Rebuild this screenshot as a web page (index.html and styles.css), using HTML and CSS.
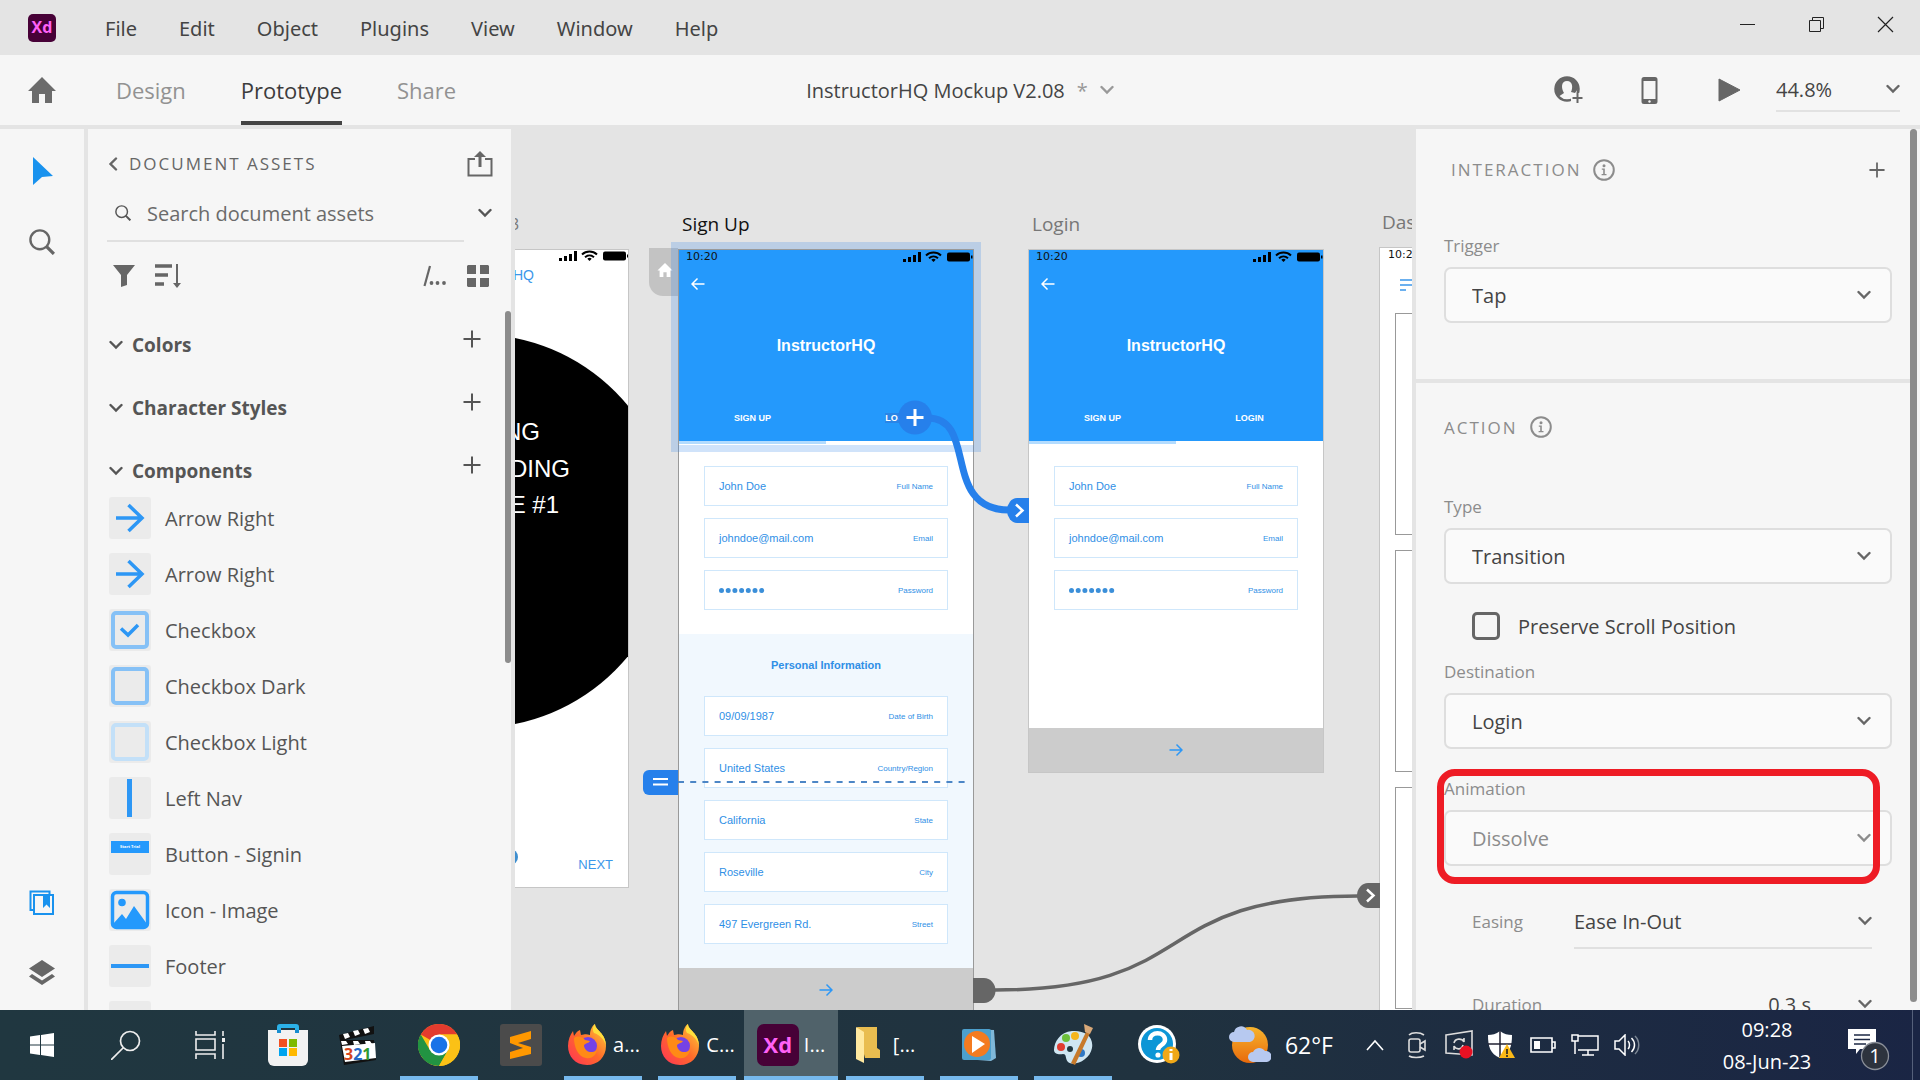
FILE: index.html
```html
<!DOCTYPE html>
<html lang="en">
<head>
  <meta charset="UTF-8">
  <meta name="viewport" content="width=device-width, initial-scale=1.0">
  <title>InstructorHQ Mockup V2.08</title>
  <link rel="stylesheet" href="styles.css">
</head>
<body>
  <!-- Shared icons -->
  <svg class="sprite" aria-hidden="true">
    <symbol id="chevron" viewBox="0 0 14 14"><path d="M1.500 4l5.500 5.500L12.500 4" fill="none" stroke="currentColor" stroke-width="2.400" stroke-linecap="round"/></symbol>
    <symbol id="plus" viewBox="0 0 18 18"><path d="M9 0.500v17M0.500 9h17" stroke="currentColor" stroke-width="2"/></symbol>
    <symbol id="info" viewBox="0 0 22 22"><circle cx="11" cy="11" r="9.800" fill="none" stroke="currentColor" stroke-width="2"/><circle cx="11" cy="6.800" r="1.500" fill="currentColor"/><path d="M8.800 9.500h3v5.500h1.700v1.300H8.600V15h1.600v-4.200H8.800z" fill="currentColor"/></symbol>
    <symbol id="arrow" viewBox="0 0 14 14"><path d="M0.500 7h12M7.500 1.500L13 7l-5.500 5.500" fill="none" stroke="currentColor" stroke-width="1.500"/></symbol>
    <symbol id="search" viewBox="0 0 24 24"><circle cx="10" cy="10" r="8.700" fill="none" stroke="currentColor" stroke-width="2.200"/><path d="M16 16l7 7" stroke="currentColor" stroke-width="3"/></symbol>
    <symbol id="status" viewBox="0 0 70 12">
      <path d="M0 8h3v3H0zM5 6h3v5H5zM10 4h3v7h-3zM15 1h3v10h-3z"/>
      <path d="M23 4.500a11 11 0 0 1 15 0M26 7.200a7 7 0 0 1 9 0" fill="none" stroke="#000" stroke-width="2"/><path d="M28.300 8.700a3.500 3.500 0 0 1 4.400 0L30.500 11z"/>
      <rect x="44" y="1.500" width="23" height="9" rx="2"/><path d="M68 4.500h1.500v3H68z"/>
    </symbol>
    <symbol id="firefox" viewBox="0 0 42 42">
      <path d="M21 41C9 41 2 32 2 22c0-6 2-11 5-15l1 5c2-3 3-5 6-6l1 5c4-1 6-1 9 0 0-5 2-9 5-11 0 6 11 9 11 22 0 11-8 19-19 19z" fill="url(#fox)"/>
      <circle cx="22" cy="22" r="9" fill="#7542e5"/>
      <path d="M8 14c4-3 9-1 11 2l5 1c-2 3-6 2-6 5 1 6 8 8 13 4-1 6-6 9-11 8C12 33 8 23 8 14z" fill="#ff8a16"/>
      <path d="M29 0c0 6 11 9 11 22-2-7-6-11-12-13-2-3-1-7 1-9z" fill="#ffdf3d"/>
    </symbol>
    <linearGradient id="fox" x1="0" y1="1" x2="1" y2="0"><stop offset="0" stop-color="#ff3158"/><stop offset=".5" stop-color="#ff6a2a"/><stop offset="1" stop-color="#ffd43a"/></linearGradient>
    <linearGradient id="sun" x1="0" y1="0" x2="0" y2="1"><stop offset="0" stop-color="#f7b52e"/><stop offset="1" stop-color="#e8690b"/></linearGradient>
  </svg>

  <header class="menubar">
    <span class="xd-logo">Xd</span>
    <nav class="menus">
      <a href="#">File</a>
      <a href="#">Edit</a>
      <a href="#">Object</a>
      <a href="#">Plugins</a>
      <a href="#">View</a>
      <a href="#">Window</a>
      <a href="#">Help</a>
    </nav>
    <div class="window-buttons">
      <button aria-label="Minimize"><svg width="17" height="17" viewBox="0 0 17 17"><path d="M1 8.500h15" stroke="#222"/></svg></button>
      <button aria-label="Restore"><svg width="17" height="17" viewBox="0 0 17 17"><path d="M1.500 4.500h11v11h-11zM4.500 4.500v-3h11v11h-3" fill="none" stroke="#222"/></svg></button>
      <button aria-label="Close"><svg width="17" height="17" viewBox="0 0 17 17"><path d="M1 1l15 15M16 1L1 16" stroke="#222" stroke-width="1.200"/></svg></button>
    </div>
  </header>

  <div class="toolbar">
    <div class="modes">
      <button class="home" aria-label="Home"><svg width="28" height="26" viewBox="0 0 28 26"><path d="M14 0l14 14h-4v12h-7v-9h-6v9H4V14H0z" fill="#6b6b6b"/></svg></button>
      <a href="#" class="mode">Design</a>
      <a href="#" class="mode active">Prototype</a>
      <a href="#" class="mode">Share</a>
    </div>
    <button class="doc-title">InstructorHQ Mockup V2.08 <span>*</span><svg width="14" height="14"><use href="#chevron"/></svg></button>
    <div class="toolbar-right">
      <button class="invite" aria-label="Invite"><svg width="30" height="28" viewBox="0 0 30 28"><circle cx="13" cy="13" r="11.500" fill="none" stroke="#666" stroke-width="2.500"/><path d="M2 14C2 6 6 1 13 1s11 5 11 12l-3 4-4-1c2-4 2-11-4-11S7 12 10 17l-6 4z" fill="#666"/><path d="M17 17h13v11H17z" fill="#f6f6f6"/><path d="M23.500 17v10M18.500 22h10" stroke="#666" stroke-width="2"/></svg></button>
      <button aria-label="Device preview"><svg width="17" height="27" viewBox="0 0 17 27"><path fill-rule="evenodd" d="M3 0h11a2.500 2.500 0 0 1 2.500 2.500v22A2.500 2.500 0 0 1 14 27H3a2.500 2.500 0 0 1-2.500-2.500v-22A2.500 2.500 0 0 1 3 0zm-.5 4v18h12V4z" fill="#666"/><circle cx="8.500" cy="24.500" r="1.200" fill="#f6f6f6"/></svg></button>
      <button aria-label="Play"><svg width="23" height="24" viewBox="0 0 23 24"><path d="M1 1l21 11L1 23z" fill="#666" stroke="#666"/></svg></button>
      <div class="select zoom-select">
        <select aria-label="Zoom"><option>44.8%</option></select>
        <svg width="14" height="14"><use href="#chevron"/></svg>
      </div>
    </div>
  </div>

  <main class="workspace">
    <aside class="tool-rail">
      <button aria-label="Select"><svg width="24" height="28" viewBox="0 0 24 28"><path d="M3 0l20 19-11 1-9 8z" fill="#1992ee"/></svg></button>
      <button aria-label="Zoom"><svg width="26" height="26"><use href="#search"/></svg></button>
      <span class="rail-space"></span>
      <button aria-label="Assets"><svg width="26" height="26" viewBox="0 0 26 26"><path d="M5 20H1.500V1.500h19V4" fill="none" stroke="#1992ee" stroke-width="2"/><path d="M5 5h19v19H5z" fill="none" stroke="#1992ee" stroke-width="2"/><path d="M14 5h7v13l-3.500-3.500L14 18z" fill="#1992ee"/></svg></button>
      <button aria-label="Layers"><svg width="26" height="26" viewBox="0 0 26 26"><path d="M13 0l13 8.500L13 17 0 8.500z" fill="#666"/><path d="M3 14l10 6.500L23 14l3 2.500L13 25 0 16.500z" fill="#666"/></svg></button>
    </aside>

    <section class="assets">
      <div class="assets-head">
        <svg class="turn-left" width="14" height="14"><use href="#chevron"/></svg>
        <h2 class="caps">DOCUMENT ASSETS</h2>
        <button aria-label="Publish"><svg width="26" height="26" viewBox="0 0 26 26"><path d="M8 8H1.500v16.500h23V8H18" fill="none" stroke="#666" stroke-width="2"/><path d="M13 16V4" stroke="#666" stroke-width="3"/><path d="M13 0l6 6H7z" fill="#666"/></svg></button>
      </div>
      <div class="search-row">
        <label for="asset-search"><svg width="16" height="16"><use href="#search"/></svg></label>
        <input type="text" id="asset-search" placeholder="Search document assets">
        <button aria-label="Search options"><svg width="14" height="14"><use href="#chevron"/></svg></button>
      </div>
      <div class="filter-row">
        <button aria-label="Filter"><svg width="22" height="22" viewBox="0 0 22 22"><path d="M0 0h22l-8 10v10l-6 2V10z" fill="#666"/></svg></button>
        <button aria-label="Sort"><svg width="26" height="24" viewBox="0 0 26 24"><path d="M0 2h17M0 11h13M0 20h9" stroke="#666" stroke-width="3.500"/><path d="M22 0v20" stroke="#666" stroke-width="2"/><path d="M18 19h8l-4 5z" fill="#666"/></svg></button>
        <button class="push" aria-label="Path"><svg width="24" height="22" viewBox="0 0 24 22"><path d="M7 1L1.500 21" stroke="#666" stroke-width="2.200"/><g fill="#666"><circle cx="8.500" cy="18" r="1.900"/><circle cx="14.500" cy="18" r="1.900"/><circle cx="21" cy="18" r="1.900"/></g></svg></button>
        <button aria-label="Grid view"><svg width="22" height="22" viewBox="0 0 22 22"><path d="M1 0h8v9H0V1zM13 0h8l1 1v8h-9zM0 13h9v9H1l-1-1zM13 13h9v8l-1 1h-8z" fill="#666"/></svg></button>
      </div>

      <div class="asset-scroll">
        <div class="asset-body">
          <div class="group"><svg width="14" height="14"><use href="#chevron"/></svg><h3>Colors</h3><button aria-label="Add color"><svg width="18" height="18"><use href="#plus"/></svg></button></div>
          <div class="group"><svg width="14" height="14"><use href="#chevron"/></svg><h3>Character Styles</h3><button aria-label="Add character style"><svg width="18" height="18"><use href="#plus"/></svg></button></div>
          <div class="group"><svg width="14" height="14"><use href="#chevron"/></svg><h3>Components</h3><button aria-label="Add component"><svg width="18" height="18"><use href="#plus"/></svg></button></div>
          <ul class="components">
            <li><svg class="thumb" viewBox="0 0 42 42"><path d="M7 21h26M19.500 8L33 21 19.500 34" fill="none" stroke="#2d97f5" stroke-width="3.500"/></svg>Arrow Right</li>
            <li><svg class="thumb" viewBox="0 0 42 42"><path d="M7 21h26M19.500 8L33 21 19.500 34" fill="none" stroke="#2d97f5" stroke-width="3.500"/></svg>Arrow Right</li>
            <li><svg class="thumb" viewBox="0 0 42 42"><rect x="4" y="4" width="34" height="34" rx="3" fill="none" stroke="#86c1f6" stroke-width="4"/><path d="M12 19.500l7 6.500 10-10" fill="none" stroke="#2d97f5" stroke-width="3.500"/></svg>Checkbox</li>
            <li><svg class="thumb" viewBox="0 0 42 42"><rect x="4" y="4" width="34" height="34" rx="3" fill="none" stroke="#86c1f6" stroke-width="4"/></svg>Checkbox Dark</li>
            <li><svg class="thumb" viewBox="0 0 42 42"><rect x="4" y="4" width="34" height="34" rx="3" fill="none" stroke="#c3e0f8" stroke-width="4"/></svg>Checkbox Light</li>
            <li><svg class="thumb" viewBox="0 0 42 42"><path d="M18 2h5v38h-5z" fill="#2d97f5"/></svg>Left Nav</li>
            <li><svg class="thumb" viewBox="0 0 42 42"><path d="M2 8h38v12H2z" fill="#2499fc"/><text x="21" y="15" class="tiny">Start Trial</text></svg>Button - Signin</li>
            <li><svg class="thumb" viewBox="0 0 42 42"><rect x="3.500" y="3.500" width="35" height="35" rx="4" fill="none" stroke="#2499fc" stroke-width="3.500"/><circle cx="13" cy="13.500" r="3.800" fill="#2499fc"/><path d="M4 35l9-10 4 5 8-13 13 18v4H4z" fill="#2499fc"/></svg>Icon - Image</li>
            <li><svg class="thumb" viewBox="0 0 42 42"><path d="M2 19h38v4H2z" fill="#2d97f5"/></svg>Footer</li>
            <li><svg class="thumb" viewBox="0 0 42 42"></svg></li>
          </ul>
        </div>
        <span class="thumb-bar"></span>
      </div>
    </section>

    <section class="canvas">
      <span class="board-name name-intro">3</span>
      <div class="artboard intro">
        <svg width="113" height="637" viewBox="0 0 113 637">
          <circle cx="-39" cy="281" r="197"/>
          <g class="intro-lines"><text x="25" y="190">NG</text><text x="55" y="227">DING</text><text x="44" y="263">E #1</text></g>
          <text class="intro-brand" x="19" y="30">HQ</text>
          <text class="intro-next" x="98" y="619">NEXT</text>
          <circle cx="-5" cy="607" r="8" fill="#3d8ecf"/>
          <use href="#status" x="44" y="0" width="70" height="12"/>
        </svg>
      </div>

      <span class="board-name name-signup">Sign Up</span>
      <div class="home-tab"><svg width="16" height="14" viewBox="0 0 28 26"><path d="M14 0l14 14h-4v12h-7v-9h-6v9H4V14H0z" fill="#fff"/></svg></div>
      <article class="artboard signup">
        <div class="board-head">
          <div class="status"><span>10:20</span><svg width="70" height="12"><use href="#status"/></svg></div>
          <svg class="back" width="14" height="14"><use href="#arrow"/></svg>
          <h4>InstructorHQ</h4>
          <div class="tabs"><span>SIGN UP</span><span><mark>LOGIN</mark></span></div>
        </div>
        <div class="tab-line"></div>
        <div class="fields">
          <div class="field"><b>John Doe</b><small>Full Name</small></div>
          <div class="field"><b>johndoe@mail.com</b><small>Email</small></div>
          <div class="field"><svg width="46" height="5" viewBox="0 0 46 5"><path d="M2.500 2.500h43" class="dots"/></svg><small>Password</small></div>
        </div>
        <div class="personal">
          <h5>Personal Information</h5>
          <div class="field"><b>09/09/1987</b><small>Date of Birth</small></div>
          <div class="field"><b>United States</b><small>Country/Region</small></div>
          <div class="field"><b>California</b><small>State</small></div>
          <div class="field"><b>Roseville</b><small>City</small></div>
          <div class="field"><b>497 Evergreen Rd.</b><small>Street</small></div>
        </div>
        <div class="board-foot"><svg width="14" height="14"><use href="#arrow"/></svg></div>
      </article>
      <div class="selection"></div>

      <span class="board-name name-login">Login</span>
      <article class="artboard login">
        <div class="board-head">
          <div class="status"><span>10:20</span><svg width="70" height="12"><use href="#status"/></svg></div>
          <svg class="back" width="14" height="14"><use href="#arrow"/></svg>
          <h4>InstructorHQ</h4>
          <div class="tabs"><span>SIGN UP</span><span>LOGIN</span></div>
        </div>
        <div class="tab-line"></div>
        <div class="fields">
          <div class="field"><b>John Doe</b><small>Full Name</small></div>
          <div class="field"><b>johndoe@mail.com</b><small>Email</small></div>
          <div class="field"><svg width="46" height="5" viewBox="0 0 46 5"><path d="M2.500 2.500h43" class="dots"/></svg><small>Password</small></div>
        </div>
        <div class="board-foot"><svg width="14" height="14"><use href="#arrow"/></svg></div>
      </article>

      <span class="board-name name-dash">Dashboard</span>
      <article class="artboard dash">
        <div class="status"><span>10:20</span></div>
        <svg class="burger" width="20" height="12" viewBox="0 0 20 12"><path d="M0 1h20M0 6h20M0 11h6" stroke="#3b97ea" stroke-width="1.500"/></svg>
        <div class="card"></div>
        <div class="card"></div>
        <div class="card"></div>
      </article>

      <!-- Prototype wires -->
      <svg class="wires" width="897" height="881" viewBox="515 129 897 881">
        <path d="M678 782h292" stroke="#4c86c6" stroke-width="2" stroke-dasharray="6 6.200"/>
        <path d="M678 770h-29a6 6 0 0 0-6 6v13a6 6 0 0 0 6 6h29z" fill="#2680eb"/>
        <path d="M653 779h15M653 784.500h15" stroke="#fff" stroke-width="2"/>
        <path d="M928 418C978 418 941 510 1009 510" fill="none" stroke="#2680eb" stroke-width="7"/>
        <circle cx="915" cy="417.500" r="17" fill="#2680eb"/>
        <path d="M915 409v17M906.500 417.500h17" stroke="#fff" stroke-width="3"/>
        <path d="M1029 498h-12a10 12.500 0 0 0 0 25h12z" fill="#2680eb"/>
        <path d="M1016 504.500l6.500 6-6.500 6" fill="none" stroke="#fff" stroke-width="2.500"/>
        <path d="M995 990C1205 990 1145 896 1358 896" fill="none" stroke="#666" stroke-width="3.500"/>
        <path d="M973 978h11a11.500 12.500 0 0 1 0 25h-11z" fill="#666"/>
        <path d="M1380 883h-12a11 12.500 0 0 0 0 25h12z" fill="#666"/>
        <path d="M1367 889.500l6.500 6-6.500 6" fill="none" stroke="#fff" stroke-width="2.500"/>
      </svg>
    </section>

    <aside class="inspector">
      <div class="inspector-scroll">
        <section class="interaction">
          <div class="inspector-head indent"><h2 class="caps">INTERACTION</h2><svg width="22" height="22"><use href="#info"/></svg><button aria-label="Add interaction"><svg width="16" height="16"><use href="#plus"/></svg></button></div>
          <div class="control">
            <label for="trigger">Trigger</label>
            <div class="select boxed"><select id="trigger"><option>Tap</option></select><svg width="14" height="14"><use href="#chevron"/></svg></div>
          </div>
        </section>
        <section class="action">
          <div class="inspector-head"><h2 class="caps">ACTION</h2><svg width="22" height="22"><use href="#info"/></svg></div>
          <div class="control">
            <label for="type">Type</label>
            <div class="select boxed"><select id="type"><option>Transition</option></select><svg width="14" height="14"><use href="#chevron"/></svg></div>
          </div>
          <div class="check">
            <input type="checkbox" id="preserve">
            <label for="preserve">Preserve Scroll Position</label>
          </div>
          <div class="control">
            <label for="destination">Destination</label>
            <div class="select boxed"><select id="destination"><option>Login</option></select><svg width="14" height="14"><use href="#chevron"/></svg></div>
          </div>
          <div class="control highlighted">
            <label for="animation">Animation</label>
            <div class="select boxed muted"><select id="animation"><option>Dissolve</option></select><svg width="14" height="14"><use href="#chevron"/></svg></div>
          </div>
          <div class="inline-control">
            <label for="easing">Easing</label>
            <div class="select lined"><select id="easing"><option>Ease In-Out</option></select><svg width="14" height="14"><use href="#chevron"/></svg></div>
          </div>
          <div class="inline-control duration">
            <label for="duration">Duration</label>
            <div class="select lined"><select id="duration"><option>0.3 s</option></select><svg width="14" height="14"><use href="#chevron"/></svg></div>
          </div>
        </section>
      </div>
      <span class="thumb-bar"></span>
    </aside>
  </main>

  <footer class="taskbar">
    <button class="sys" aria-label="Start"><svg width="24" height="24" viewBox="0 0 24 24"><path d="M0 3.500L10 2v9.500H0zM11 2l13-2v11.500H11zM0 12.500h10V22L0 20.500zM11 12.500h13V24l-13-2z" fill="#fff"/></svg></button>
    <button class="sys" aria-label="Search"><svg width="30" height="30" viewBox="0 0 30 30"><circle cx="19" cy="11" r="9.500" fill="none" stroke="#eee" stroke-width="1.700"/><path d="M12 18L0 30" stroke="#eee" stroke-width="1.700"/></svg></button>
    <button class="sys" aria-label="Task view"><svg width="30" height="28" viewBox="0 0 30 28"><path d="M1 0v4h19V0M1 28v-5h19v5M1 8h19v11H1zM28 0v5M28 13v15" fill="none" stroke="#eee" stroke-width="1.600"/><path d="M27 7h3v4h-3z" fill="#eee"/></svg></button>
    <button class="pin store" aria-label="Store"><svg width="40" height="42" viewBox="0 0 40 42"><path d="M9 9V3a3 3 0 0 1 3-3h16a3 3 0 0 1 3 3v6h-4V4H13v5z" fill="#2bb1e8"/><path d="M0 6h40v30a6 6 0 0 1-6 6H6a6 6 0 0 1-6-6z" fill="#f2f2f2"/><path d="M9 6h4v3H9zM27 6h4v3h-4z" fill="#178ed0"/><path d="M11 15h8v8h-8z" fill="#f25022"/><path d="M21 15h8v8h-8z" fill="#7fba00"/><path d="M11 24h8v8h-8z" fill="#00a4ef"/><path d="M21 24h8v8h-8z" fill="#ffb900"/></svg></button>
    <button class="pin" aria-label="Media player"><svg width="40" height="40" viewBox="0 0 40 40"><path d="M1 10L36 1v8L2 16z" fill="#111"/><path d="M5 9l5-1 2 4-5 2zM15 6l5-1 2 4-5 2zM25 4l5-1 2 4-5 2z" fill="#fff"/><path d="M2 15h34l2 20-32 5z" fill="#111"/><path d="M4 21l33-3 1 15-31 4z" fill="#fff"/><path d="M3 16h5l2 3-6 1zM15 16h5l2 3-6 1zM27 16h5l2 3-6 1z" fill="#fff"/><text x="6" y="35" class="clap"><tspan fill="#d8451c">3</tspan><tspan fill="#2468c8">2</tspan><tspan fill="#2f9b2f">1</tspan></text></svg></button>
    <button class="task running" aria-label="Chrome"><svg width="42" height="42" viewBox="0 0 42 42"><circle cx="21" cy="21" r="21" fill="#fbc116"/><path d="M21 21L2.800 10.500a21 21 0 0 1 36.400 0H21z" fill="#e33b2e"/><path d="M21 21l9 5.200L21 42A21 21 0 0 1 2.800 10.500L12 26.200z" fill="#229342"/><path d="M21 10.500h18.200A21 21 0 0 1 21 42l9-15.700z" fill="#fbc116"/><circle cx="21" cy="21" r="10.500" fill="#fff"/><circle cx="21" cy="21" r="8.300" fill="#1a73e8"/></svg></button>
    <button class="pin editor" aria-label="Sublime Text"><svg width="42" height="42" viewBox="0 0 42 42"><rect width="42" height="42" rx="3" fill="#4b4b4b"/><path d="M31 7v8l-13 4 13 4v7L10 35v-7l13-4-13-5v-6z" fill="#ff9800"/></svg></button>
    <button class="task running"><svg width="42" height="42"><use href="#firefox"/></svg><span>a...</span></button>
    <button class="task running"><svg width="42" height="42"><use href="#firefox"/></svg><span>C...</span></button>
    <button class="task running current"><i class="xd-big">Xd</i><span>I...</span></button>
    <button class="task running folder"><svg width="26" height="38" viewBox="0 0 26 38"><path d="M2 1h20v21l3 2v8H10z" fill="#e9bd50"/><path d="M1 1l8 5v31l-8-4z" fill="#ffe9a0"/></svg><span>[...</span></button>
    <button class="task running" aria-label="Video player"><svg width="36" height="36" viewBox="0 0 36 36"><path d="M5 2l28 1 2 28-5 3L3 32z" fill="#7fb8d9"/><rect x="1" y="2" width="29" height="31" rx="2" fill="#4c9fcc"/><circle cx="16" cy="17" r="13" fill="#f47b20"/><path d="M11 9l13 8-13 9z" fill="#fff"/></svg></button>
    <button class="task running" aria-label="Paint"><svg width="42" height="42" viewBox="0 0 42 42"><path d="M20 7C8 8 2 18 2 26c0 4 5 5 9 4 4 0 2 5 5 8 6 5 22-2 24-14C42 12 32 6 20 7z" fill="#cfe6f2"/><circle cx="9" cy="23" r="4" fill="#e03c31"/><circle cx="14" cy="14" r="4" fill="#6cbf3a"/><circle cx="23" cy="12" r="4" fill="#f4b51d"/><circle cx="29" cy="29" r="4" fill="#2f78c4"/><circle cx="18" cy="25" r="3" fill="#203740"/><path d="M34 8l4 1-15 32-4-2z" fill="#c77a2b"/><path d="M32 0l9 4-3 6-5-2z" fill="#d8a878"/></svg></button>
    <button class="pin help" aria-label="Help"><svg width="42" height="40" viewBox="0 0 42 40"><circle cx="19" cy="19" r="19" fill="#fff"/><circle cx="19" cy="19" r="16" fill="#0d96d6"/><path d="M12 15c0-9 15-9 15 0 0 5-7 5-7 10" fill="none" stroke="#fff" stroke-width="4.500"/><circle cx="20" cy="30" r="2.600" fill="#fff"/><circle cx="33" cy="30" r="8.500" fill="#f0a818"/><path d="M33 28v7M33 24v2" stroke="#fff" stroke-width="3"/></svg></button>

    <div class="tray">
      <button class="weather"><svg width="42" height="40" viewBox="0 0 42 40"><circle cx="21" cy="20" r="18" fill="url(#sun)"/><path d="M5 17a5 5 0 0 1 0-10 7 7 0 0 1 13-2 6 6 0 0 1 3 12z" fill="#b7c9f0"/><path d="M24 37a5 5 0 0 1 0-10 7 7 0 0 1 12-1 5.500 5.500 0 0 1 2 11z" fill="#b7c9f0"/></svg>62°F</button>
      <button aria-label="Hidden icons"><svg width="18" height="12" viewBox="0 0 18 12"><path d="M1 11l8-9 8 9" fill="none" stroke="#fff" stroke-width="1.600"/></svg></button>
      <button aria-label="Camera"><svg width="22" height="28" viewBox="0 0 22 28"><g fill="none" stroke="#ddd" stroke-width="1.600"><rect x="3" y="8" width="11" height="13" rx="2"/><path d="M14 13l5-3v9l-5-3M3 4c3-3 11-3 15 0M3 25c3 2 11 2 15 0"/></g></svg></button>
      <button aria-label="Sync"><svg width="30" height="30" viewBox="0 0 30 30"><path d="M2 5l26-4v24L2 23z" fill="none" stroke="#ddd" stroke-width="1.600"/><path d="M10 13c1-5 8-5 10-1v-4M19 15c-1 5-7 5-9 1v4" fill="none" stroke="#ddd" stroke-width="1.600"/><circle cx="22" cy="22" r="6.500" fill="#e81123"/></svg></button>
      <button aria-label="Security"><svg width="28" height="30" viewBox="0 0 28 30"><path d="M13 1c4 3 8 4 12 4 0 11-2 19-12 23C3 24 1 16 1 5c4 0 8-1 12-4z" fill="#fff"/><path d="M13 1v26M1 14h24" stroke="#223" stroke-width="1.500"/><path d="M20 14l8 14H12z" fill="#fbb917"/><path d="M20 19v5M20 25v2" stroke="#222" stroke-width="1.600"/></svg></button>
      <button aria-label="Battery"><svg width="26" height="16" viewBox="0 0 26 16"><path d="M1 1h21v14H1zM22 5h3v6h-3" fill="none" stroke="#fff" stroke-width="1.600"/><path d="M4 4h6v8H4z" fill="#fff"/></svg></button>
      <button aria-label="Network"><svg width="28" height="22" viewBox="0 0 28 22"><path d="M7 2h20v14H7M17 16v5M11 21h12M1 1h6v6H1zM4 7v13" fill="none" stroke="#fff" stroke-width="1.500"/></svg></button>
      <button aria-label="Volume"><svg width="26" height="22" viewBox="0 0 26 22"><path d="M1 7h4l6-6v20l-6-6H1zM14 7c2 2 2 6 0 8M17.500 4c4 4 4 10 0 14" fill="none" stroke="#fff" stroke-width="1.500"/><path d="M21 2c5 5 5 13 0 18" fill="none" stroke="#7c8795" stroke-width="1.500"/></svg></button>
      <button class="clock"><span>09:28</span><span>08-Jun-23</span></button>
      <button class="notice" aria-label="Notifications"><svg width="44" height="44" viewBox="0 0 44 44"><path d="M2 2h28v20H14l-4 5v-5H2z" fill="#fff"/><path d="M8 8h16M8 12.500h16M8 17h12" stroke="#1d2944" stroke-width="1.700"/><circle cx="29" cy="29" r="13.500" fill="#2d333e" stroke="#8a8f99" stroke-width="1.300"/><text x="29" y="36" class="badge">1</text></svg></button>
    </div>
  </footer>
</body>
</html>
```
FILE: styles.css
```css
* {
  box-sizing: border-box;
}
body {
  margin: 0;
  height: 100vh;
  display: flex;
  flex-direction: column;
  overflow: hidden;
  background-color: #e4e4e4;
  color: #444;
  font-family: "Open Sans", "Noto Sans", sans-serif;
  font-size: 20px;
}
h2, h3, h4, h5, ul {
  margin: 0;
  padding: 0;
  font-weight: normal;
}
a {
  color: inherit;
  text-decoration: none;
}
button {
  border: none;
  background: none;
  padding: 0;
  color: inherit;
  font: inherit;
  cursor: pointer;
}
svg {
  display: block;
  flex: none;
}
.sprite {
  position: absolute;
  width: 0;
  height: 0;
}
.caps {
  font-size: 17px;
  letter-spacing: 2px;
}

/* Menu bar */
.menubar {
  flex: none;
  height: 55px;
  display: flex;
  align-items: center;
  padding-left: 28px;
}
.xd-logo {
  width: 28px;
  height: 28px;
  margin-right: 49px;
  border-radius: 5px;
  background-color: #470137;
  color: #ff61f6;
  font-size: 16px;
  font-weight: bold;
  line-height: 26px;
  text-align: center;
}
.menus {
  flex: 1;
  display: flex;
  gap: 42px;
  padding-top: 2px;
  font-family: "Noto Sans", sans-serif;
}
.window-buttons {
  display: flex;
  align-self: flex-start;
}
.window-buttons button {
  width: 69px;
  height: 48px;
  display: grid;
  place-items: center;
}

/* Toolbar */
.toolbar {
  flex: none;
  height: 70px;
  display: grid;
  grid-template-columns: 1fr auto 1fr;
  background-color: #f6f6f6;
}
.modes {
  display: flex;
  gap: 55px;
  padding-left: 28px;
  font-size: 22px;
}
.home {
  margin-right: 5px;
}
.mode {
  line-height: 70px;
  color: #929292;
}
.mode.active {
  color: #3c3c3c;
  box-shadow: inset 0 -4px #444;
}
.doc-title {
  display: flex;
  align-items: center;
  gap: 12px;
}
.doc-title span,
.doc-title svg {
  color: #999;
}
.toolbar-right {
  display: flex;
  justify-content: flex-end;
  align-items: center;
  gap: 60px;
  padding-right: 20px;
}
.invite {
  margin-right: -3px;
}
.toolbar-right .zoom-select {
  width: 124px;
  margin-left: -25px;
  border-bottom: 2px solid #e2e2e2;
}
.select {
  display: grid;
  align-items: center;
}
.select select,
.select svg {
  grid-area: 1 / 1;
}
.select select {
  width: 100%;
  appearance: none;
  border: none;
  background: none;
  padding: 0;
  color: #444;
  font: inherit;
}
.select svg {
  justify-self: end;
  color: #666;
  pointer-events: none;
}
.zoom-select select {
  height: 42px;
}

/* Workspace */
.workspace {
  flex: 1;
  min-height: 0;
  display: flex;
  gap: 4px;
  padding-top: 4px;
}
.tool-rail {
  width: 84px;
  display: flex;
  flex-direction: column;
  align-items: center;
  gap: 44px;
  padding: 28px 0 24px;
  background-color: #f6f6f6;
  color: #666;
}
.rail-space {
  flex: 1;
}
.assets {
  width: 423px;
  display: flex;
  flex-direction: column;
  background-color: #f6f6f6;
  color: #555;
}
.assets-head {
  height: 69px;
  display: flex;
  align-items: center;
  gap: 9px;
  padding: 0 18px;
  color: #666;
}
.assets-head h2 {
  flex: 1;
}
.turn-left {
  transform: rotate(90deg);
}
.search-row {
  height: 42px;
  display: flex;
  align-items: center;
  margin-left: 19px;
  padding: 0 0 12px 8px;
}
.search-row input {
  flex: 1;
  min-width: 0;
  height: 30px;
  margin-left: 16px;
  padding: 0;
  border: none;
  background: none;
  font: inherit;
}
.search-row input::placeholder {
  color: #6b6b6b;
}
.search-row button {
  margin-right: 19px;
}
.filter-row {
  height: 71px;
  display: flex;
  align-items: center;
  gap: 20px;
  margin: 0 22px 0 19px;
  padding-left: 6px;
  background: linear-gradient(#e0e0e0, #e0e0e0) 0 0 / 357px 2px no-repeat;
}
.push {
  margin-left: auto;
}
.asset-scroll {
  flex: 1;
  min-height: 0;
  display: flex;
}
.asset-body {
  flex: 1;
  overflow: hidden;
}
.group {
  height: 63px;
  display: flex;
  align-items: center;
  gap: 9px;
  padding: 4px 24px 0 21px;
}
.group h3 {
  flex: 1;
  font-size: 19px;
  font-weight: bold;
}
.group button {
  padding-bottom: 12px;
}
.components {
  list-style: none;
  margin-top: -3px;
  padding-left: 21px;
  color: #555;
}
.components li {
  display: flex;
  align-items: center;
  gap: 14px;
  height: 42px;
  margin-bottom: 14px;
}
.thumb {
  width: 42px;
  height: 42px;
  border-radius: 3px;
  background-color: #ebebeb;
}
.tiny {
  fill: #fff;
  font-size: 4px;
  font-weight: bold;
  text-anchor: middle;
}
.thumb-bar {
  width: 6px;
  height: 352px;
  border-radius: 4px;
  background-color: #8c8c8c;
}

/* Canvas */
.canvas {
  flex: 1;
  min-width: 0;
  position: relative;
  overflow: hidden;
  font-family: "Liberation Sans", Arial, sans-serif;
}
.board-name {
  position: absolute;
  top: 82px;
  color: #777;
  font-family: "Open Sans", sans-serif;
  font-size: 19px;
  line-height: 26px;
}
.name-intro {
  left: -5px;
  font-size: 16px;
}
.name-signup {
  left: 167px;
  color: #111;
}
.name-login {
  left: 517px;
}
.name-dash {
  left: 867px;
  top: 80px;
}
.artboard {
  position: absolute;
  top: 121px;
  background-color: #fff;
  outline: 1px solid #c6c6c6;
}
.intro {
  left: 0;
  width: 113px;
  height: 637px;
}
.intro-lines {
  fill: #fff;
  font-size: 24px;
  text-anchor: end;
}
.intro-brand {
  fill: #3b97ea;
  font-size: 14px;
  text-anchor: end;
}
.intro-next {
  fill: #3b97ea;
  font-size: 13px;
  text-anchor: end;
}
.home-tab {
  position: absolute;
  left: 134px;
  top: 119px;
  width: 29px;
  height: 48px;
  padding: 15px 0 0 8px;
  border-radius: 0 0 0 14px;
  background-color: #c3c3c3;
}
.signup {
  left: 164px;
  width: 294px;
  outline-color: #999;
}
.login {
  left: 514px;
  width: 294px;
}
.selection {
  position: absolute;
  left: 156px;
  top: 113px;
  width: 310px;
  height: 210px;
  border: 7px solid rgba(60, 140, 235, 0.24);
}
.board-head {
  height: 191px;
  display: flex;
  flex-direction: column;
  background-color: #2499fc;
  color: #fff;
}
.status {
  display: flex;
  justify-content: space-between;
  padding: 1px 0 0 7px;
  color: #111;
  font-family: "DejaVu Sans", sans-serif;
  font-size: 11px;
  line-height: 12px;
}
.back {
  margin: 14px 0 0 12px;
  transform: rotate(180deg);
}
.board-head h4 {
  margin-top: 45px;
  font-size: 16px;
  font-weight: bold;
  line-height: 20px;
  text-align: center;
}
.tabs {
  display: grid;
  grid-template-columns: 1fr 1fr;
  margin-top: 56px;
  font-size: 9px;
  font-weight: bold;
  line-height: 12px;
  text-align: center;
}
.tabs mark {
  background-color: #2a85e6;
  color: #fff;
}
.tab-line {
  height: 3px;
  background: linear-gradient(90deg, #b3dcff 50%, #fff 50%);
}
.fields {
  height: 190px;
  display: flex;
  flex-direction: column;
  gap: 12px;
  padding: 22px 25px 0;
}
.field {
  height: 40px;
  display: flex;
  justify-content: space-between;
  align-items: center;
  padding: 0 14px;
  border: 1px solid #cfe7fb;
  background-color: #fff;
  color: #2f8fe6;
}
.field b {
  font-size: 11px;
  font-weight: normal;
}
.field small {
  font-size: 8px;
}
.dots {
  fill: none;
  stroke: #3b8fd9;
  stroke-width: 5;
  stroke-linecap: round;
  stroke-dasharray: 0 6.7;
}
.personal {
  display: flex;
  flex-direction: column;
  gap: 12px;
  padding: 23px 25px 24px;
  background-color: #f1f8fe;
}
.personal h5 {
  margin-bottom: 11px;
  color: #2f8fe6;
  font-size: 11px;
  font-weight: bold;
  line-height: 16px;
  text-align: center;
}
.board-foot {
  height: 44px;
  display: grid;
  place-items: center;
  background-color: #ccc;
  color: #2d97f5;
}
.login .fields {
  height: 284px;
}
.dash {
  left: 865px;
  top: 119px;
  width: 294px;
  height: 780px;
  padding: 0 15px;
}
.dash .status {
  padding-left: 0;
  margin-left: -7px;
}
.burger {
  margin: 18px 0 22px 5px;
}
.card {
  height: 222px;
  margin-bottom: 15px;
  border: 1px solid #999;
}
.wires {
  position: absolute;
  left: 0;
  top: 0;
}

/* Inspector */
.inspector {
  width: 504px;
  display: flex;
  padding-right: 3px;
  background-color: #f6f6f6;
}
.inspector .thumb-bar {
  width: 7px;
  height: auto;
  margin-bottom: 8px;
}
.inspector-scroll {
  flex: 1;
  overflow: hidden;
}
.interaction,
.action {
  padding: 0 18px 0 28px;
}
.interaction {
  height: 254px;
  border-bottom: 4px solid #e4e4e4;
}
.inspector-head {
  height: 88px;
  display: flex;
  align-items: center;
  gap: 12px;
  color: #8c8c8c;
}
.indent {
  height: 81px;
  padding-left: 7px;
}
.inspector-head button {
  margin: 0 7px 0 auto;
  color: #666;
}
.control label {
  display: block;
  height: 34px;
  color: #8c8c8c;
  font-size: 17px;
  line-height: 26px;
}
.control {
  margin-top: 23px;
}
.boxed {
  height: 56px;
  padding: 0 19px 0 26px;
  border: 2px solid #dedede;
  border-radius: 7px;
  background-color: #fafafa;
}
.boxed select {
  height: 52px;
}
.muted select,
.muted svg {
  color: #8c8c8c;
}
.check {
  display: flex;
  align-items: center;
  gap: 18px;
  margin: 28px 0 0 28px;
}
.check input {
  appearance: none;
  width: 28px;
  height: 28px;
  margin: 0;
  border: 3px solid #666;
  border-radius: 5px;
}
.check + .control {
  margin-top: 19px;
}
.highlighted {
  position: relative;
  margin-top: 27px;
}
.highlighted::after {
  content: "";
  position: absolute;
  left: -7px;
  top: -7px;
  right: 12px;
  bottom: -18px;
  border: 7px solid #ee1c25;
  border-radius: 18px;
}
.inline-control {
  display: grid;
  grid-template-columns: 102px 1fr;
  align-items: center;
  margin: 29px 20px 0 28px;
}
.inline-control label {
  padding-bottom: 2px;
  color: #8c8c8c;
  font-size: 17px;
}
.lined {
  border-bottom: 2px solid #e0e0e0;
}
.lined select {
  height: 52px;
}
.duration .lined select {
  padding-right: 61px;
  text-align: right;
  text-align-last: right;
}

/* Taskbar */
.taskbar {
  flex: none;
  height: 70px;
  display: flex;
  background: linear-gradient(90deg, #203740, #20323f 60%, #1a2544);
  color: #fff;
}
.taskbar button {
  display: flex;
  justify-content: center;
  align-items: center;
}
.sys {
  width: 84px;
}
.pin {
  width: 68px;
}
.store {
  width: 72px;
}
.editor {
  width: 70px;
}
.help {
  width: 78px;
}
.task {
  width: 94px;
  gap: 5px;
  background: linear-gradient(#76b9ed, #76b9ed) bottom / 78px 4px no-repeat;
}
.current {
  background: linear-gradient(#76b9ed, #76b9ed) bottom / 94px 4px no-repeat #50626a;
}
.folder {
  gap: 12px;
}
.task span {
  line-height: 30px;
}
.xd-big {
  width: 42px;
  height: 42px;
  border-radius: 7px;
  background-color: #470137;
  color: #ff61f6;
  font-size: 22px;
  font-style: normal;
  font-weight: bold;
  line-height: 40px;
}
.clap {
  font-size: 16px;
  font-weight: bold;
}
.tray {
  display: flex;
  margin-left: auto;
  margin-right: 7px;
  padding-right: 2px;
  border-right: 1px solid #55607a;
}
.tray button {
  width: 42px;
}
.tray .weather {
  width: auto;
  gap: 14px;
  margin-right: 21px;
  font-size: 23px;
}
.tray .clock {
  width: 118px;
  margin-left: 60px;
  padding-top: 2px;
  flex-direction: column;
  line-height: 32px;
}
.tray .notice {
  width: 84px;
  padding-top: 8px;
}
.badge {
  fill: #fff;
  font-size: 20px;
  text-anchor: middle;
}
```
